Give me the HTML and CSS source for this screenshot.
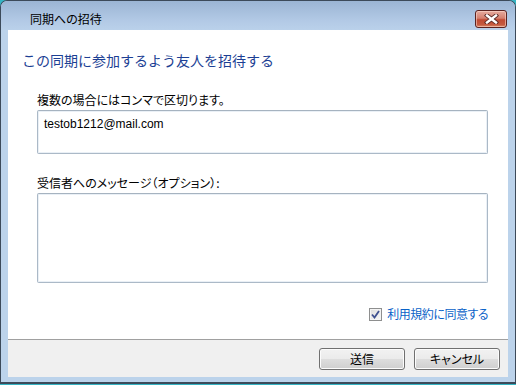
FILE: index.html
```html
<!DOCTYPE html>
<html lang="ja">
<head>
<meta charset="utf-8">
<title>同期への招待</title>
<link rel="stylesheet" href="styles.css">
</head>
<body>
<div class="window">
  <div class="titlebar">
    <span class="title">同期への招待</span>
    <button class="close" aria-label="閉じる">
      <svg width="15" height="10" viewBox="0 0 15 10">
        <path d="M3 1.5 L12 8.5 M12 1.5 L3 8.5" stroke="#5a2a26" stroke-width="4.2" stroke-linecap="square" fill="none"/>
        <path d="M3 1.5 L12 8.5 M12 1.5 L3 8.5" stroke="#ffffff" stroke-width="2.4" stroke-linecap="square" fill="none"/>
      </svg>
    </button>
  </div>
  <div class="content">
    <h1 class="heading">この同期に参加するよう友人を招待する</h1>
    <div class="label">複数の場合にはコンマで区切ります。</div>
    <div class="field field-email">testob1212@mail.com</div>
    <div class="label label-msg">受信者へのメッセージ（オプション）:</div>
    <div class="field field-msg"></div>
    <div class="agree">
      <span class="checkbox">
        <svg width="9" height="9" viewBox="0 0 9 9">
          <path d="M1 4.5 L3.5 7.5 L8 1" stroke="#3d4f8f" stroke-width="1.8" fill="none"/>
        </svg>
      </span>
      <span class="agree-text">利用規約に同意する</span>
    </div>
  </div>
  <div class="footer">
    <button class="btn">送信</button>
    <button class="btn">キャンセル</button>
  </div>
</div>
</body>
</html>
```
FILE: styles.css
```css
* { box-sizing: border-box; }
html, body { margin: 0; padding: 0; }
body {
  background: #35b4c4;
  width: 516px;
  height: 385px;
  font-family: "Noto Sans CJK JP", "Liberation Sans", sans-serif;
  font-feature-settings: "palt";
}
.window {
  width: 516px;
  height: 384px;
  display: flex;
  flex-direction: column;
  border: 1px solid #3c4a5a;
  border-bottom-width: 2px;
  border-radius: 7px 7px 0 0;
  background: #bcd3eb;
  padding: 0 7px 5px 7px;
}
.titlebar {
  height: 29px;
  flex: none;
  display: flex;
  align-items: flex-start;
  margin: 0 -7px;
  padding: 0 8px 0 29px;
  border-radius: 6px 6px 0 0;
  background: linear-gradient(#9bb5d4, #b3cae6 70%, #bad1ea);
}
.title {
  font-size: 12px;
  line-height: 16px;
  margin-top: 10px;
  color: #000;
}
.close {
  margin-left: auto;
  margin-top: 9px;
  width: 32px;
  height: 18px;
  padding: 0;
  border: 1px solid #5b2320;
  border-radius: 3px;
  background: linear-gradient(#e6ab9f, #d5806f 45%, #c04a33 55%, #c55a3f 85%, #d98b6b);
  box-shadow: inset 0 0 0 1px rgba(255, 220, 210, 0.55);
  display: flex;
  align-items: center;
  justify-content: center;
}
.close svg { display: block; }
.content {
  height: 309px;
  flex: none;
  background: #fff;
  padding: 20px 20px 0 14px;
  display: flex;
  flex-direction: column;
}
.heading {
  margin: 0;
  font-size: 14px;
  font-weight: normal;
  line-height: 20px;
  color: #1c3f94;
  font-feature-settings: normal;
}
.label {
  margin: 22px 0 2px 15px;
  font-size: 12px;
  line-height: 16px;
  color: #000;
}
.label-msg { margin-top: 21px; }
.field {
  margin-left: 15px;
  border: 1px solid #abb9c7;
  border-top-color: #a6b3c0;
  border-radius: 2px;
  background: #fff;
  box-shadow: inset 0 0 0 1px #eaf0f6;
}
.field-email {
  height: 44px;
  padding: 5px 0 0 6px;
  font-family: "Liberation Sans", sans-serif;
  font-size: 12px;
  line-height: 16px;
  color: #000;
}
.field-msg { height: 90px; }
.agree {
  margin-top: 23px;
  align-self: flex-end;
  display: flex;
  align-items: center;
  gap: 5px;
}
.checkbox {
  width: 13px;
  height: 13px;
  border: 1px solid #8e8f8f;
  background: linear-gradient(135deg, #dcdcdc, #f6f6f6);
  box-shadow: inset 0 0 0 1px #f4f4f4;
  display: flex;
  align-items: center;
  justify-content: center;
}
.checkbox svg { display: block; }
.agree-text {
  font-size: 12px;
  line-height: 16px;
  letter-spacing: -0.5px;
  color: #0a62c8;
}
.footer {
  height: 38px;
  flex: none;
  border-top: 1px solid #a0a0a0;
  background: #f0f0f0;
  display: flex;
  justify-content: flex-end;
  align-items: flex-start;
  gap: 9px;
  padding: 8px 8px 0 0;
}
.btn {
  width: 86px;
  height: 22px;
  padding: 0;
  border: 1px solid #707070;
  border-radius: 3px;
  background: linear-gradient(#f2f2f2, #ebebeb 48%, #dddddd 52%, #cfcfcf);
  box-shadow: inset 0 0 0 1px #fcfcfc;
  font-family: "Noto Sans CJK JP", sans-serif;
  font-feature-settings: "palt";
  font-size: 12px;
  line-height: 16px;
  color: #000;
}
```
